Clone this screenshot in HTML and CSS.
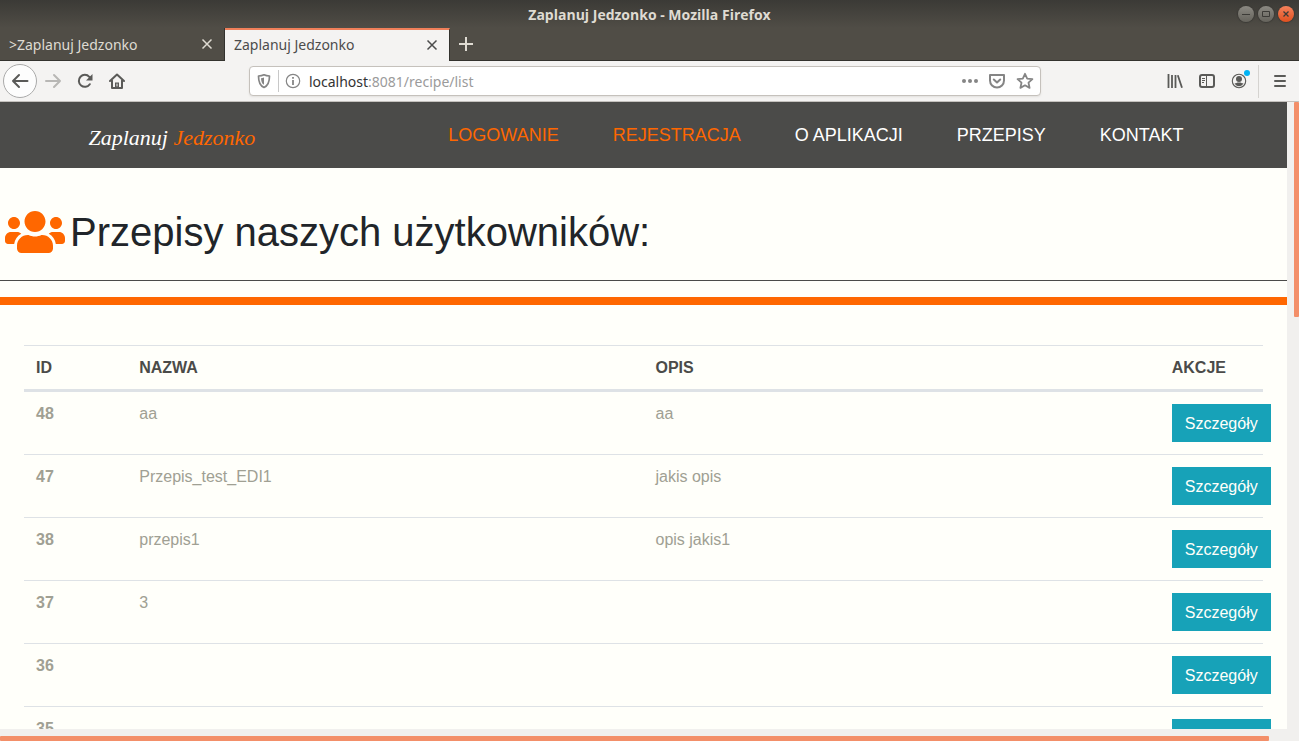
FILE: index.html
```html
<!DOCTYPE html>
<html lang="pl">
<head>
<meta charset="utf-8">
<title>Zaplanuj Jedzonko</title>
<link rel="stylesheet" href="styles.css">
</head>
<body>
<div class="browser">
  <div class="titlebar">
    <span class="window-title">Zaplanuj Jedzonko - Mozilla Firefox</span>
    <div class="window-controls">
      <button class="window-button" aria-label="Minimalizuj"><svg width="16" height="16" viewBox="0 0 16 16"><path d="M4 8.500h8" stroke="#3c3b37"/></svg></button>
      <button class="window-button" aria-label="Maksymalizuj"><svg width="16" height="16" viewBox="0 0 16 16"><path d="M4.500 5.500h7v5h-7z" fill="none" stroke="#3c3b37"/></svg></button>
      <button class="window-button window-close" aria-label="Zamknij"><svg width="16" height="16" viewBox="0 0 16 16"><path d="M5.500 5.500l5 5m0-5l-5 5" stroke="#3c3b37" stroke-width="1.300"/></svg></button>
    </div>
  </div>

  <div class="tabs">
    <div class="tab">
      <span>&gt;Zaplanuj Jedzonko</span>
      <button class="icon-button" aria-label="Zamknij kartę"><svg width="16" height="16" viewBox="0 0 16 16"><path d="M3.500 3.500l9 9m0-9l-9 9" stroke="currentColor" stroke-width="1.500"/></svg></button>
    </div>
    <div class="tab tab-active">
      <span>Zaplanuj Jedzonko</span>
      <button class="icon-button" aria-label="Zamknij kartę"><svg width="16" height="16" viewBox="0 0 16 16"><path d="M3.500 3.500l9 9m0-9l-9 9" stroke="currentColor" stroke-width="1.500"/></svg></button>
    </div>
    <button class="icon-button new-tab" aria-label="Nowa karta"><svg width="16" height="16" viewBox="0 0 16 16"><path d="M8 1v14M1 8h14" stroke="currentColor" stroke-width="2"/></svg></button>
  </div>

  <div class="toolbar">
    <div class="toolbar-side">
      <button class="icon-button back" aria-label="Wstecz"><svg width="18" height="18" viewBox="0 0 18 18" fill="none" stroke="currentColor" stroke-width="2" stroke-linecap="round" stroke-linejoin="round"><path d="M16.500 9H2M8 3L2 9l6 6"/></svg></button>
      <button class="icon-button forward" aria-label="Dalej"><svg width="18" height="18" viewBox="0 0 18 18" fill="none" stroke="currentColor" stroke-width="2" stroke-linecap="round" stroke-linejoin="round"><path d="M2 9h14M10 3l6 6-6 6"/></svg></button>
      <button class="icon-button" aria-label="Odśwież"><svg width="16" height="16" viewBox="0 0 16 16"><path d="M12.800 11.200A6 6 0 1 1 12.300 3.800L14 5.500" fill="none" stroke="currentColor" stroke-width="2" stroke-linecap="round"/><path d="M15.500 1v6.500H9z" fill="currentColor"/></svg></button>
      <button class="icon-button" aria-label="Strona startowa"><svg width="16" height="16" viewBox="0 0 16 16" fill="none" stroke="currentColor" stroke-width="2" stroke-linecap="round" stroke-linejoin="round"><path d="M1 8l7-6.500L15 8M3 7.500V15h10V7.500"/><path d="M6 15V9.500h4V15z" fill="currentColor" stroke="none"/><path d="M8 11v2" stroke="#f4f3f2" stroke-width="1"/></svg></button>
    </div>
    <div class="address">
      <svg width="16" height="16" viewBox="0 0 16 16"><path d="M8 1.800c2 1 4 1.200 5.500 1.200 0 5.500-.8 9.500-5.500 11.500C3.300 12.500 2.500 8.500 2.500 3 4 3 6 2.800 8 1.800z" fill="none" stroke="currentColor" stroke-width="1.700" stroke-linejoin="round"/><path d="M8 4.500v7.300C5.600 10.500 5.200 8 5 5.200 6 5.200 7 5 8 4.500z" fill="currentColor"/></svg>
      <span class="address-divider"></span>
      <svg width="16" height="16" viewBox="0 0 16 16"><circle cx="8" cy="8" r="6.700" fill="none" stroke="currentColor" stroke-width="1.200"/><path d="M8 7v5M8 4v1.800" stroke="currentColor" stroke-width="1.800"/></svg>
      <a class="url" href="#"><span class="url-host">localhost</span>:8081/recipe/list</a>
      <button class="icon-button" aria-label="Więcej"><svg width="16" height="16" viewBox="0 0 16 16" fill="currentColor"><circle cx="2" cy="8" r="2"/><circle cx="8" cy="8" r="2"/><circle cx="14" cy="8" r="2"/></svg></button>
      <button class="icon-button" aria-label="Pocket"><svg width="16" height="16" viewBox="0 0 16 16" fill="none" stroke="currentColor" stroke-width="2" stroke-linecap="round" stroke-linejoin="round"><path d="M1 2h14v5.500a7 7 0 0 1-14 0zM4.800 6.500L8 9.500l3.200-3"/></svg></button>
      <button class="icon-button" aria-label="Dodaj zakładkę"><svg width="18" height="18" viewBox="0 0 18 18" fill="none" stroke="currentColor" stroke-width="1.800" stroke-linejoin="round"><path d="M9 1.800l2.200 4.800 5.200.6-3.900 3.500 1.100 5.200L9 13.300l-4.600 2.600 1.100-5.200L1.600 7.200l5.200-.6z"/></svg></button>
    </div>
    <div class="toolbar-side toolbar-end">
      <button class="icon-button" aria-label="Biblioteka"><svg width="16" height="16" viewBox="0 0 16 16" stroke="currentColor" stroke-width="1.800"><path d="M1.500 1v14M5 2v13M8.500 2v13M10.800 2.300L15 14.700"/></svg></button>
      <button class="icon-button" aria-label="Panel boczny"><svg width="16" height="16" viewBox="0 0 16 16" fill="none" stroke="currentColor"><rect x="1" y="2" width="14" height="12" rx="2" stroke-width="2"/><path d="M7.500 2v12M3 5.500h3M3 7.500h3M3 9.500h2"/></svg></button>
      <button class="icon-button account" aria-label="Konto"><svg width="16" height="16" viewBox="0 0 16 16"><circle cx="8" cy="8" r="6.700" fill="none" stroke="currentColor" stroke-width="1.100"/><circle cx="8" cy="6" r="3" fill="currentColor"/><path d="M3.500 10.200c2 .2 2 -.5 3-.8h3c1 .3 1 1 3 .8-1 2-2.600 3-4.500 3s-3.500-1-4.500-3z" fill="currentColor"/></svg></button>
      <span class="toolbar-divider"></span>
      <button class="icon-button" aria-label="Menu"><svg width="14" height="14" viewBox="0 0 14 14" stroke="currentColor" stroke-width="2" stroke-linecap="round"><path d="M2 2h10M2 7h10M2 12h10"/></svg></button>
    </div>
  </div>

  <div class="viewport">
    <div class="page">
      <header class="site-header">
        <div class="container">
          <a class="logo" href="#">Zaplanuj <span>Jedzonko</span></a>
          <nav class="site-nav">
            <a class="accent" href="#">LOGOWANIE</a>
            <a class="accent" href="#">REJESTRACJA</a>
            <a href="#">O APLIKACJI</a>
            <a href="#">PRZEPISY</a>
            <a href="#">KONTAKT</a>
          </nav>
        </div>
      </header>
      <main>
        <div class="page-title">
          <svg width="60" height="48" viewBox="0 0 640 512" fill="currentColor"><path d="M96 224c35.300 0 64-28.700 64-64s-28.700-64-64-64-64 28.700-64 64 28.700 64 64 64zm448 0c35.300 0 64-28.700 64-64s-28.700-64-64-64-64 28.700-64 64 28.700 64 64 64zm32 32h-64c-17.600 0-33.500 7.100-45.100 18.600 40.300 22.100 68.900 62 75.100 109.400h66c17.700 0 32-14.300 32-32v-32c0-35.300-28.700-64-64-64zm-256 0c61.900 0 112-50.100 112-112S381.900 32 320 32 208 82.100 208 144s50.100 112 112 112zm76.800 32h-8.300c-20.800 10-43.900 16-68.500 16s-47.600-6-68.500-16h-8.300C179.600 288 128 339.600 128 403.200V432c0 26.500 21.500 48 48 48h288c26.500 0 48-21.500 48-48v-28.800c0-63.600-51.600-115.200-115.200-115.200zm-223.700-13.400C161.500 263.100 145.600 256 128 256H64c-35.300 0-64 28.700-64 64v32c0 17.700 14.300 32 32 32h65.900c6.300-47.400 34.900-87.300 75.200-109.400z"/></svg>
          <h1>Przepisy naszych użytkowników:</h1>
        </div>
        <hr class="thick-rule">
        <div class="recipes">
          <table>
            <thead>
              <tr><th class="narrow" scope="col">ID</th><th class="wide" scope="col">NAZWA</th><th class="wide" scope="col">OPIS</th><th class="narrow" scope="col">AKCJE</th></tr>
            </thead>
            <tbody>
              <tr><th scope="row">48</th><td>aa</td><td>aa</td><td><button class="details">Szczegóły</button></td></tr>
              <tr><th scope="row">47</th><td>Przepis_test_EDI1</td><td>jakis opis</td><td><button class="details">Szczegóły</button></td></tr>
              <tr><th scope="row">38</th><td>przepis1</td><td>opis jakis1</td><td><button class="details">Szczegóły</button></td></tr>
              <tr><th scope="row">37</th><td>3</td><td></td><td><button class="details">Szczegóły</button></td></tr>
              <tr><th scope="row">36</th><td></td><td></td><td><button class="details">Szczegóły</button></td></tr>
              <tr><th scope="row">35</th><td></td><td></td><td><button class="details" aria-label="Szczegóły"></button></td></tr>
            </tbody>
          </table>
        </div>
      </main>
    </div>
    <div class="scroll-y"><div class="thumb-y"></div></div>
    <div class="scroll-x"><div class="thumb-x"></div></div>
  </div>
</div>
</body>
</html>
```
FILE: styles.css
```css
* { box-sizing: border-box; }
body { margin: 0; font-family: "Liberation Sans", Arial, sans-serif; }
button { font: inherit; border: 0; padding: 0; background: none; color: inherit; }
a { color: inherit; text-decoration: none; }
svg { display: block; flex: none; }

.browser { display: flex; flex-direction: column; height: 100vh; overflow: hidden; font-family: "Noto Sans", sans-serif; font-size: 14px; }

.titlebar { display: grid; grid-template-columns: 1fr auto 1fr; align-items: center; height: 28px; flex: none; padding: 0 5px; background: linear-gradient(#3b3a36, #504d46); color: #dfdbd2; }
.window-title { grid-column: 2; font-family: "Open Sans", sans-serif; font-weight: bold; }
.window-controls { display: flex; justify-content: flex-end; gap: 4px; }
.window-button { width: 16px; height: 16px; border-radius: 50%; background: linear-gradient(#8b8982, #65635c); box-shadow: 0 0 1px 1px #3b3a36; }
.window-close { background: linear-gradient(#f5825c, #e0501f); }

.tabs { display: flex; height: 33px; flex: none; background: #504d46; border-bottom: 1px solid #33322e; color: #dfdbd2; }
.tab { display: flex; align-items: center; justify-content: space-between; width: 225px; padding: 0 9px; border-right: 1px solid #33322e; }
.tab-active { margin-bottom: -1px; padding-bottom: 2px; border-top: 2px solid #f0805a; background: #f4f3f2; color: #4c4c4c; }
.icon-button { display: flex; align-items: center; justify-content: center; }
.new-tab { width: 32px; }

.toolbar { display: flex; align-items: center; height: 41px; flex: none; padding: 0 12px 0 3px; border-bottom: 1px solid #c4c1bd; background: #f4f3f2; color: #5a5a58; }
.toolbar-side { display: flex; align-items: center; gap: 16px; flex: 1 1 0; }
.toolbar-end { justify-content: flex-end; }
.back { width: 34px; height: 34px; border: 1px solid #aaa; border-radius: 50%; background: #fdfdfd; }
.forward { margin: 0 -1px 0 -9px; color: #b8b7b5; }
.address { display: flex; align-items: center; gap: 6px; width: 61.700%; height: 30px; padding: 0 6px; border: 1px solid #c5c1bc; border-radius: 4px; background: #fff; color: #858585; box-shadow: 0 1px 2px #e2e0de; }
.address .icon-button { margin-left: 5px; }
.address-divider { width: 1px; height: 22px; background: #c8c8c8; }
.url { flex: 1; margin-left: 2px; color: #9b9b9b; }
.url-host { color: #333; }
.account { position: relative; }
.account::after { content: ""; position: absolute; top: -3px; right: -3px; width: 6px; height: 6px; border-radius: 50%; background: #00b3f4; }
.toolbar-divider { width: 1px; height: 33px; margin: 0 -2px 0 -5px; background: #d5d3d0; }

.viewport { display: grid; grid-template: minmax(0, 1fr) 12px / minmax(0, 1fr) 12px; flex: 1; min-height: 0; background: #f1f0ee; }
.page { overflow: hidden; background: #fffffa; font-family: "Liberation Sans", Arial, sans-serif; font-size: 16px; }
.scroll-y { padding-left: 7px; }
.thumb-y { height: 34.300%; border-radius: 1px; background: #f38f69; }
.scroll-x { padding-top: 7px; }
.thumb-x { width: 98.600%; height: 5px; border-radius: 1px; background: #f38f69; }

.site-header { background: #4b4b49; color: #fff; }
.container { display: flex; align-items: center; justify-content: space-between; max-width: 1140px; height: 66px; margin: 0 auto; padding: 0 30px 0 15px; }
.logo { padding-top: 6px; font-family: "Liberation Serif", "Times New Roman", serif; font-style: italic; font-size: 22px; }
.logo span, .accent { color: #ff6700; }
.site-nav { display: flex; gap: 54px; font-size: 18px; }

.page-title { display: flex; gap: 5px; padding: 40px 5px 24px; border-bottom: 1px solid #4b4b49; color: #ff6700; }
h1 { margin: 0; font-size: 40px; font-weight: normal; line-height: 48px; color: #212529; }
.thick-rule { height: 8px; margin: 16px 0 40px; border: 0; background: #ff6700; }
.recipes { padding: 0 24px; }
table { width: 100%; table-layout: fixed; border-collapse: separate; border-spacing: 0; line-height: 19px; color: #a0a093; }
th, td { padding: 12px; border-top: 1px solid #dee2e6; text-align: left; vertical-align: top; }
thead th { border-bottom: 3px solid #dee2e6; color: #4b4b49; }
tbody tr:first-child > * { border-top: 0; }
.narrow { width: 8.333%; }
.wide { width: 41.667%; }
.details { display: block; min-width: 99px; height: 38px; padding: 0 13px; background: #17a2b8; color: #fffffa; white-space: nowrap; }
```
